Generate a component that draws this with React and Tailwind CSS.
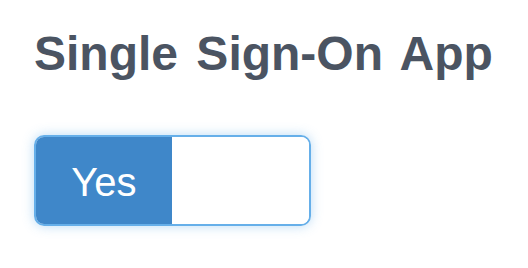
export default function App() {
  return (
    <div className="h-[268px] w-[528px] bg-white px-[34px] pt-[26px] font-['Liberation_Sans',Arial,sans-serif]">
      <h1 className="whitespace-nowrap text-[48px] font-bold leading-[56px] text-[#4b5462] [word-spacing:5px]">Single Sign-On App</h1>
      <div className="mt-[53px] flex h-[91px] w-[277px] overflow-hidden rounded-[10px] border-2 border-[#66afe9] shadow-[0_0_12px_rgba(102,175,233,0.45)]">
        <div className="flex w-[136px] items-center justify-center bg-[#3f87c9] pt-[2px] text-[40px] text-white">Yes</div>
        <div className="flex-1 bg-white" />
      </div>
    </div>
  );
}
